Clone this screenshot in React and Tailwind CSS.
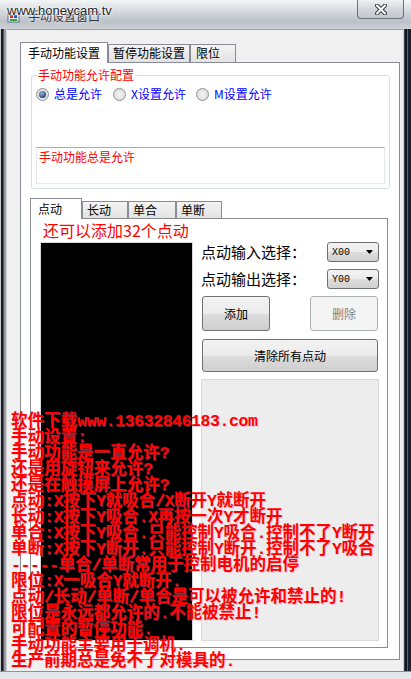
import React from 'react';

const notes = [
  '软件下载www.13632846183.com',
  '手动设置:',
  '手动功能是一直允许?',
  '还是用旋钮来允许?',
  '还是在触摸屏上允许?',
  '点动:X按下Y就吸合/X断开Y就断开',
  '长动:X按下Y吸合.X再按一次Y才断开',
  '单合:X按下Y吸合.只能控制Y吸合.控制不了Y断开',
  '单断:X按下Y断开.只能控制Y断开.控制不了Y吸合',
  '-----单合/单断常用于控制电机的启停',
  '限位:X一吸合Y就断开.',
  '点动/长动/单断/单合是可以被允许和禁止的!',
  '限位是永远都允许的.不能被禁止!',
  '可配置的暂停功能.',
  '手动功能主要用于调机.',
  '生产前期总是免不了对模具的.',
];

const tabOn = 'relative z-10 -mb-px h-[21px] bg-white border-x border-t border-[#898c95] text-[12px] leading-[19px] text-black';
const tabOff = 'bg-[linear-gradient(to_bottom,#f4f4f4,#e2e2e2)] border-x border-t border-[#898c95] text-[12px] leading-[16px] text-black';
const btn = 'rounded-[3px] border border-[#707070] bg-[linear-gradient(to_bottom,#f3f3f3_0%,#ebebeb_50%,#dddddd_51%,#cfcfcf_100%)] text-[12px] text-black flex items-center justify-center';

// 半角字符窄一点
function NoteLine({ text }) {
  const parts = text.match(/[\x20-\x7e]+|[^\x20-\x7e]+/g) || [];
  return (
    <div>
      {parts.map((p, i) =>
        /^[\x20-\x7e]/.test(p)
          ? <span key={i} className="tracking-[-0.4px]">{p}</span>
          : <span key={i}>{p}</span>
      )}
    </div>
  );
}

function Radio({ label, checked, className }) {
  return (
    <div className={'flex items-center gap-[5px] ' + className}>
      <span className="w-[13px] h-[13px] rounded-full border border-[#8e8f8f] bg-[radial-gradient(circle,#f6f6f6,#d4d4d4)] flex items-center justify-center">
        {checked && <span className="w-[7px] h-[7px] rounded-full bg-[radial-gradient(circle_at_40%_35%,#9ab8e6,#1c3b70_75%)]" />}
      </span>
      <span className="text-[12px] leading-[16px] text-[#0000ff]">{label}</span>
    </div>
  );
}

function Combo({ value }) {
  return (
    <div className="w-[52px] h-[20px] rounded-[3px] border border-[#707070] bg-[linear-gradient(to_bottom,#f3f3f3_0%,#ebebeb_50%,#dddddd_51%,#d0d0d0_100%)] flex items-center justify-between pl-[4px] pr-[5px]">
      <span className="font-['Liberation_Mono',monospace] text-[10px] text-black">{value}</span>
      <svg width="7" height="4" viewBox="0 0 7 4"><path d="M0 0H7L3.5 4Z" fill="#000" /></svg>
    </div>
  );
}

export default function App() {
  return (
    <div className="w-[411px] h-[679px] relative overflow-hidden bg-[#dde1e6] font-['Noto_Sans_CJK_SC',sans-serif]">
      {/* 标题栏 */}
      <div className="h-[29px] flex justify-between items-start bg-[linear-gradient(to_bottom,#f4f5f7,#d8dce1_35%,#bcc1c8_75%,#cfd3d8)]">
        <div className="flex items-center pl-[7px] pt-[9px] gap-[8px]">
          <svg width="13" height="13" viewBox="0 0 13 13">
            <rect x="1" y="3" width="11" height="9" fill="#e8eef8" stroke="#5a6a90" />
            <rect x="3" y="5" width="3" height="3" fill="#d82020" />
            <rect x="7" y="5" width="3" height="3" fill="#2050c0" />
            <rect x="3" y="9" width="7" height="2" fill="#30a040" />
          </svg>
          <span className="text-[12px] leading-[14px] text-[#3a3a3a] [text-shadow:0_0_4px_#fff]">手动设置窗口</span>
        </div>
        <div className="mr-[7px] w-[47px] h-[19px] rounded-b-[4px] border border-t-0 border-[#6b7079] bg-[linear-gradient(to_bottom,#eef0f3,#d3d7dc_50%,#c3c8cf)] flex items-center justify-center">
          <svg width="12" height="11" viewBox="0 0 12 11">
            <path d="M2 1.5L10 9.5M10 1.5L2 9.5" stroke="#3a3f48" strokeWidth="4" strokeLinecap="round" />
            <path d="M2 1.5L10 9.5M10 1.5L2 9.5" stroke="#fff" strokeWidth="2" strokeLinecap="round" />
          </svg>
        </div>
      </div>
      <div className="absolute left-[7px] top-[3px] font-['Liberation_Sans',sans-serif] text-[13px] leading-[15px] text-[#262626] [text-shadow:0_0_2px_#fff,0_0_2px_#fff,0_0_3px_#fff]">
        www.honeycam.tv
      </div>

      <div className="flex h-[642px]">
        <div className="w-[7px] bg-[linear-gradient(to_right,#c9ccd1_0px,#c9ccd1_1px,#1b1b22_1px,#1b1b22_3px,#54575e_3px,#54575e_4px,#9a9ca2_4px,#9a9ca2_6px,#d2d4d8_6px)]" />

        {/* 客户区 */}
        <div className="w-[396px] bg-[#f0f0f0] border-t border-[#9aa0a8] pt-[12px] pl-[13px]">
          <div className="flex items-end h-[20px]">
            <div className={tabOn + ' w-[88px] pl-[7px]'}>手动功能设置</div>
            <div className={tabOff + ' h-[18px] w-[82px] pl-[4px]'}>暂停功能设置</div>
            <div className={tabOff + ' h-[18px] w-[46px] pl-[5px]'}>限位</div>
          </div>
          <div className="w-[380px] h-[598px] border border-[#898c95] bg-white">
            {/* 允许配置 */}
            <div className="relative mt-[12px] ml-[10px] w-[359px] h-[114px] rounded-[3px] border border-[#d5dfe5] pl-[4px] pr-[4px]">
              <span className="absolute left-[5px] -top-[8px] bg-white px-[1px] text-[12px] leading-[14px] text-[#ff0000]">手动功能允许配置</span>
              <div className="flex items-center h-[16px] mt-[10px]">
                <Radio checked label="总是允许" className="w-[77px]" />
                <Radio label="X设置允许" className="w-[83px]" />
                <Radio label="M设置允许" className="" />
              </div>
              <div className="mt-[45px] h-[37px] border border-[#e3e9ef] border-t-[#abadb3] bg-white pl-[2px] pt-[1px] text-[12px] leading-[16px] text-[#ff0000]">
                手动功能总是允许
              </div>
            </div>

            {/* 点动 页 */}
            <div className="flex items-end h-[20px] mt-[9px] ml-[9px]">
              <div className={tabOn + ' w-[52px] pl-[7px]'}>点动</div>
              <div className={tabOff + ' h-[17px] w-[46px] pl-[4px]'}>长动</div>
              <div className={tabOff + ' h-[17px] w-[48px] pl-[4px]'}>单合</div>
              <div className={tabOff + ' h-[17px] w-[46px] pl-[4px]'}>单断</div>
            </div>
            <div className="ml-[9px] w-[358px] h-[430px] border border-[#898c95] bg-white">
              <div className="mt-[2px] pl-[12px] text-[16px] leading-[18px] text-[#ff0000]">还可以添加32个点动</div>
              <div className="flex mt-[3px] pl-[9px] gap-[8px]">
                <div className="w-[153px] h-[399px] bg-black border border-[#d8d8d8]" />
                <div className="w-[178px] flex flex-col">
                  <div className="flex items-center justify-between h-[20px]">
                    <span className="text-[15px] leading-[18px] text-black">点动输入选择：</span>
                    <Combo value="X00" />
                  </div>
                  <div className="flex items-center justify-between h-[20px] mt-[7px]">
                    <span className="text-[15px] leading-[18px] text-black">点动输出选择：</span>
                    <Combo value="Y00" />
                  </div>
                  <div className="flex justify-between px-[1px] mt-[7px]">
                    <div className={btn + ' w-[68px] h-[35px]'}>添加</div>
                    <div className="w-[68px] h-[35px] rounded-[3px] border border-[#adb2b5] bg-[#f4f4f4] text-[12px] text-[#838383] flex items-center justify-center">删除</div>
                  </div>
                  <div className={btn + ' mx-[1px] h-[33px] mt-[8px]'}>清除所有点动</div>
                  <div className="mt-[7px] h-[262px] border border-[#d9d9d9] bg-[#ededed]" />
                </div>
              </div>
            </div>
          </div>
        </div>

        <div className="w-[8px] bg-[linear-gradient(to_right,#c8cdd3_0px,#c8cdd3_1px,#3a4050_1px,#3a4050_2px,#121726_2px,#121726_4px,#5a6070_4px,#5a6070_5px,#1a2030_5px)]" />
      </div>
      <div className="h-[8px] border-t border-[#8d929a] bg-[#e3e6ea]" />

      {/* 说明文字 */}
      <div className="absolute left-[11px] top-[414px] font-['Liberation_Mono','Noto_Sans_CJK_SC',monospace] font-bold text-[16.5px] leading-[16px] text-[#ff0000] whitespace-nowrap [text-shadow:1px_1px_0_rgba(255,120,170,0.4)]">
        {notes.map((line, i) => (
          <NoteLine key={i} text={line} />
        ))}
      </div>
    </div>
  );
}
